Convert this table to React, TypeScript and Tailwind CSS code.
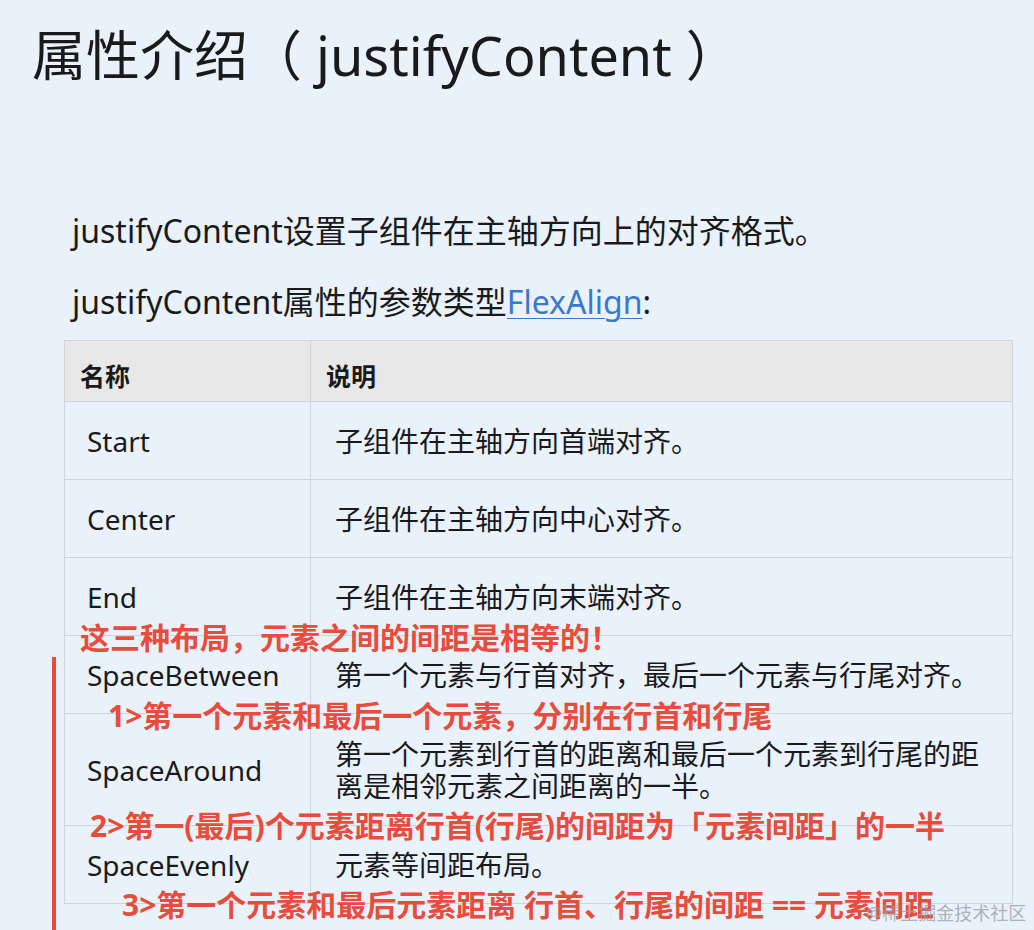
import React from 'react';

const rows: { name: string; desc: string[] }[] = [
  { name: 'Start', desc: ['子组件在主轴方向首端对齐。'] },
  { name: 'Center', desc: ['子组件在主轴方向中心对齐。'] },
  { name: 'End', desc: ['子组件在主轴方向末端对齐。'] },
  { name: 'SpaceBetween', desc: ['第一个元素与行首对齐，最后一个元素与行尾对齐。'] },
  {
    name: 'SpaceAround',
    desc: ['第一个元素到行首的距离和最后一个元素到行尾的距', '离是相邻元素之间距离的一半。'],
  },
  { name: 'SpaceEvenly', desc: ['元素等间距布局。'] },
];

// hand-written notes drawn over the table
const notes: { text: string; className: string }[] = [
  { text: '这三种布局，元素之间的间距是相等的！', className: 'left-[80px] top-[620px]' },
  { text: '1>第一个元素和最后一个元素，分别在行首和行尾', className: 'left-[108px] top-[698px]' },
  {
    text: '2>第一(最后)个元素距离行首(行尾)的间距为「元素间距」的一半',
    className: 'left-[90px] top-[808px]',
  },
  {
    text: '3>第一个元素和最后元素距离 行首、行尾的间距 == 元素间距',
    className: 'left-[122px] top-[887px]',
  },
];

export default function App() {
  return (
    <div className="relative h-[930px] w-[1034px] overflow-hidden bg-[#e9f2fb] text-[#1a1a1a] font-['Noto_Sans','Noto_Sans_CJK_SC',sans-serif]">
      <h1 className="pl-[32px] pt-[19px] text-[54px] leading-[72px] font-normal">
        属性介绍（ justifyContent ）
      </h1>

      <div className="pl-[72px] pt-[118px] text-[32px] leading-[44px]">
        <p>justifyContent设置子组件在主轴方向上的对齐格式。</p>
        <p className="mt-[27px]">
          justifyContent属性的参数类型
          <span className="text-[#3a78cf] underline decoration-1 underline-offset-4">FlexAlign</span>:
        </p>
      </div>

      <div className="ml-[64px] mt-[16px] w-[949px] border border-[#cfd4da]">
        <div className="grid grid-cols-[246px_1fr] bg-[#e8e8e9] text-[25px] font-bold leading-[30px]">
          <div className="border-r border-[#cfd4da] pb-[10px] pl-[15px] pt-[20px]">名称</div>
          <div className="pb-[10px] pl-[15px] pt-[20px]">说明</div>
        </div>
        {rows.map((row) => (
          <div
            key={row.name}
            className="grid grid-cols-[246px_1fr] border-t border-[#cfd4da] text-[28px]"
          >
            <div className="flex items-center border-r border-[#cfd4da] px-[22px] leading-[30px]">
              {row.name}
            </div>
            <div
              className={
                row.desc.length > 1
                  ? 'pb-[23px] pl-[24px] pt-[24px] leading-[32px]'
                  : 'pb-[23px] pl-[24px] pt-[24px] leading-[30px]'
              }
            >
              {row.desc.map((line) => (
                <div key={line}>{line}</div>
              ))}
            </div>
          </div>
        ))}
      </div>

      {notes.map((note) => (
        <div
          key={note.text}
          className={`absolute whitespace-nowrap text-[30px] font-bold leading-[36px] text-[#e74c3c] ${note.className}`}
        >
          {note.text}
        </div>
      ))}

      <div className="absolute left-[52px] top-[657px] h-[273px] w-[4px] bg-[#e74c3c]" />

      <div className="absolute left-[866px] top-[900px] whitespace-nowrap text-[18px] leading-[26px] text-[#9aa0a8]/80">
        @稀土掘金技术社区
      </div>
    </div>
  );
}
